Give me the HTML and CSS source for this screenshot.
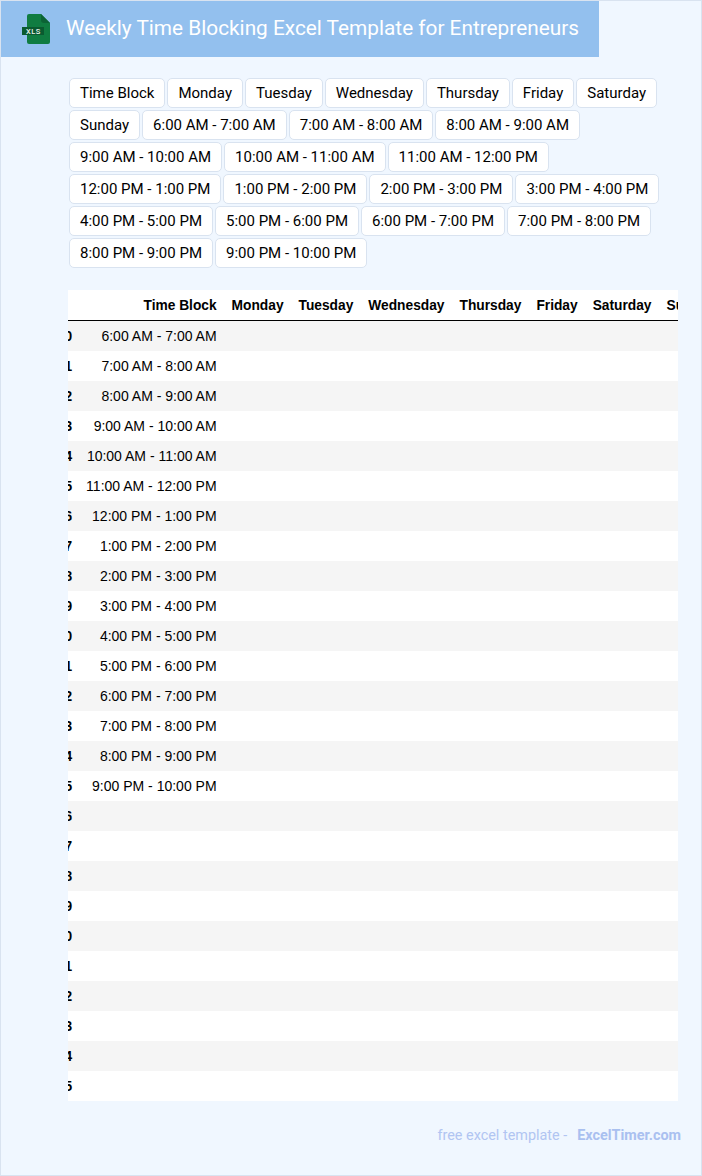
FILE: index.html
```html
<!DOCTYPE html>
<html lang="en">
<head>
<meta charset="utf-8">
<title>Weekly Time Blocking Excel Template for Entrepreneurs</title>
<link rel="stylesheet" href="styles.css">
</head>
<body>
<div class="page">
  <header class="banner">
    <svg class="logo" width="30" height="30" viewBox="0 0 30 30" aria-hidden="true">
      <path d="M7 2a2 2 0 0 1 2-2h12l9 9v19a2 2 0 0 1-2 2H9a2 2 0 0 1-2-2z" fill="#107c41"/>
      <path d="M21 0v6a3 3 0 0 0 3 3h6z" fill="#0c6335"/>
      <rect x="2" y="13" width="22" height="8" fill="#0a5a30"/>
      <text class="logo-text" x="13.5" y="19.8" text-anchor="middle">XLS</text>
    </svg>
    <h1 class="title">Weekly Time Blocking Excel Template for Entrepreneurs</h1>
  </header>
  <main class="content">
    <div class="chips">
      <span class="chip">Time Block</span><span class="chip">Monday</span><span class="chip">Tuesday</span><span class="chip">Wednesday</span><span class="chip">Thursday</span><span class="chip">Friday</span><span class="chip">Saturday</span><span class="chip">Sunday</span>
      <span class="chip">6:00 AM - 7:00 AM</span><span class="chip">7:00 AM - 8:00 AM</span><span class="chip">8:00 AM - 9:00 AM</span><span class="chip">9:00 AM - 10:00 AM</span><span class="chip">10:00 AM - 11:00 AM</span><span class="chip">11:00 AM - 12:00 PM</span><span class="chip">12:00 PM - 1:00 PM</span><span class="chip">1:00 PM - 2:00 PM</span><span class="chip">2:00 PM - 3:00 PM</span><span class="chip">3:00 PM - 4:00 PM</span><span class="chip">4:00 PM - 5:00 PM</span><span class="chip">5:00 PM - 6:00 PM</span><span class="chip">6:00 PM - 7:00 PM</span><span class="chip">7:00 PM - 8:00 PM</span><span class="chip">8:00 PM - 9:00 PM</span><span class="chip">9:00 PM - 10:00 PM</span>
    </div>
    <div class="table-wrap">
      <table class="sheet">
        <thead>
          <tr><th></th><th>Time Block</th><th>Monday</th><th>Tuesday</th><th>Wednesday</th><th>Thursday</th><th>Friday</th><th>Saturday</th><th>Sunday</th></tr>
        </thead>
        <tbody>
          <tr><th>0</th><td>6:00 AM - 7:00 AM</td><td></td><td></td><td></td><td></td><td></td><td></td><td></td></tr>
          <tr><th>1</th><td>7:00 AM - 8:00 AM</td><td></td><td></td><td></td><td></td><td></td><td></td><td></td></tr>
          <tr><th>2</th><td>8:00 AM - 9:00 AM</td><td></td><td></td><td></td><td></td><td></td><td></td><td></td></tr>
          <tr><th>3</th><td>9:00 AM - 10:00 AM</td><td></td><td></td><td></td><td></td><td></td><td></td><td></td></tr>
          <tr><th>4</th><td>10:00 AM - 11:00 AM</td><td></td><td></td><td></td><td></td><td></td><td></td><td></td></tr>
          <tr><th>5</th><td>11:00 AM - 12:00 PM</td><td></td><td></td><td></td><td></td><td></td><td></td><td></td></tr>
          <tr><th>6</th><td>12:00 PM - 1:00 PM</td><td></td><td></td><td></td><td></td><td></td><td></td><td></td></tr>
          <tr><th>7</th><td>1:00 PM - 2:00 PM</td><td></td><td></td><td></td><td></td><td></td><td></td><td></td></tr>
          <tr><th>8</th><td>2:00 PM - 3:00 PM</td><td></td><td></td><td></td><td></td><td></td><td></td><td></td></tr>
          <tr><th>9</th><td>3:00 PM - 4:00 PM</td><td></td><td></td><td></td><td></td><td></td><td></td><td></td></tr>
          <tr><th>10</th><td>4:00 PM - 5:00 PM</td><td></td><td></td><td></td><td></td><td></td><td></td><td></td></tr>
          <tr><th>11</th><td>5:00 PM - 6:00 PM</td><td></td><td></td><td></td><td></td><td></td><td></td><td></td></tr>
          <tr><th>12</th><td>6:00 PM - 7:00 PM</td><td></td><td></td><td></td><td></td><td></td><td></td><td></td></tr>
          <tr><th>13</th><td>7:00 PM - 8:00 PM</td><td></td><td></td><td></td><td></td><td></td><td></td><td></td></tr>
          <tr><th>14</th><td>8:00 PM - 9:00 PM</td><td></td><td></td><td></td><td></td><td></td><td></td><td></td></tr>
          <tr><th>15</th><td>9:00 PM - 10:00 PM</td><td></td><td></td><td></td><td></td><td></td><td></td><td></td></tr>
          <tr><th>16</th><td></td><td></td><td></td><td></td><td></td><td></td><td></td><td></td></tr>
          <tr><th>17</th><td></td><td></td><td></td><td></td><td></td><td></td><td></td><td></td></tr>
          <tr><th>18</th><td></td><td></td><td></td><td></td><td></td><td></td><td></td><td></td></tr>
          <tr><th>19</th><td></td><td></td><td></td><td></td><td></td><td></td><td></td><td></td></tr>
          <tr><th>20</th><td></td><td></td><td></td><td></td><td></td><td></td><td></td><td></td></tr>
          <tr><th>21</th><td></td><td></td><td></td><td></td><td></td><td></td><td></td><td></td></tr>
          <tr><th>22</th><td></td><td></td><td></td><td></td><td></td><td></td><td></td><td></td></tr>
          <tr><th>23</th><td></td><td></td><td></td><td></td><td></td><td></td><td></td><td></td></tr>
          <tr><th>24</th><td></td><td></td><td></td><td></td><td></td><td></td><td></td><td></td></tr>
          <tr><th>25</th><td></td><td></td><td></td><td></td><td></td><td></td><td></td><td></td></tr>
        </tbody>
      </table>
    </div>
    <footer class="credit">free excel template - <a class="credit-link">ExcelTimer.com</a></footer>
  </main>
</div>
</body>
</html>
```
FILE: styles.css
```css
* { box-sizing: border-box; }
html, body { margin: 0; padding: 0; }
body { font-family: Roboto, sans-serif; background: #f0f7ff; }
.page {
  width: 702px;
  height: 1176px;
  border: 1px solid #d9e3f0;
  background: #f0f7ff;
  overflow: hidden;
}
.banner {
  width: 598px;
  height: 56px;
  background: #93c0ee;
  display: flex;
  align-items: center;
  padding-left: 19px;
}
.logo { flex: none; }
.logo-text { font: 500 7.5px Roboto, sans-serif; letter-spacing: .5px; fill: #e8f3ec; }
.title {
  margin: 0 0 2px 16px;
  font: 400 20.8px/28px Roboto, sans-serif;
  color: #fff;
  white-space: nowrap;
}
.content { padding: 21px 23px 0 67px; }
.chips { display: flex; flex-wrap: wrap; gap: 2px; margin-left: 1px; }
.chip {
  height: 30px;
  padding: 0 10px;
  border: 1px solid #d9e3f0;
  border-radius: 5px;
  background: #fff;
  color: #000;
  font-size: 15px;
  line-height: 28px;
  white-space: nowrap;
}
.table-wrap { margin-top: 22px; overflow: hidden; background: #fff; }
.sheet {
  margin-left: -18.7px;
  border-collapse: separate;
  border-spacing: 0;
  font: 14px "Liberation Sans", Arial, sans-serif;
  color: #000;
  white-space: nowrap;
}
.sheet th, .sheet td {
  height: 30px;
  padding: 0 7.5px;
  text-align: right;
  vertical-align: middle;
}
.sheet th { font-size: 13.75px; font-weight: 700; }
.sheet th:first-child { padding-right: 6.5px; }
.sheet thead th { height: 31px; border-bottom: 1px solid #000; }
.sheet tbody tr:nth-child(odd) { background: #f5f5f5; }
.sheet tbody tr:nth-child(even) { background: #fff; }
.credit {
  margin-top: 25px;
  margin-right: -3px;
  text-align: right;
  color: #b1c5f2;
  font-size: 14.4px;
  line-height: 20px;
}
.credit-link { margin-left: 6.5px; font-weight: 700; color: #a9c0f0; }
```
